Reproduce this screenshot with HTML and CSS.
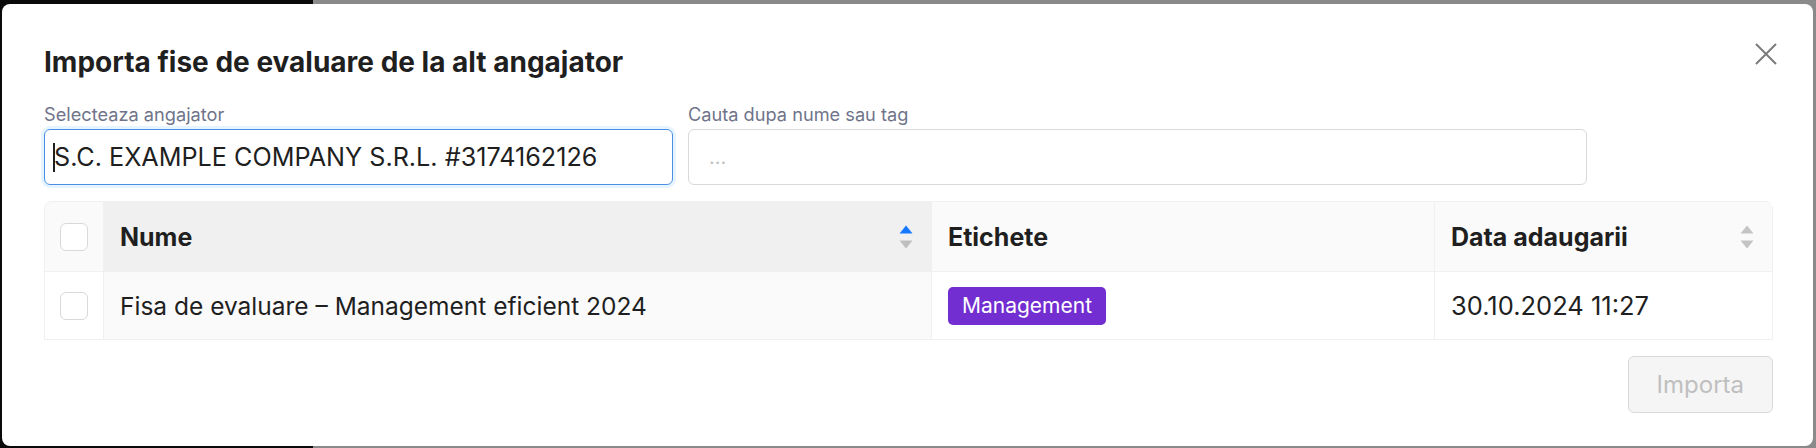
FILE: index.html
```html
<!DOCTYPE html>
<html lang="ro">
<head>
    <meta charset="UTF-8">
    <meta name="viewport" content="width=device-width, initial-scale=1.0">
    <title>Importa fise de evaluare</title>
    <link rel="stylesheet" href="styles.css">
</head>
<body>
    <div class="modal">
        <div class="modal-header">
            <h2 class="modal-title">Importa fise de evaluare de la alt angajator</h2>
            <button class="close-button" aria-label="Inchide">
                <svg width="22" height="22" viewBox="0 0 22 22">
                    <path d="M1 1 L21 21 M21 1 L1 21" stroke="#7b7b7b" stroke-width="2" fill="none"/>
                </svg>
            </button>
        </div>

        <div class="filters">
            <div class="field field-company">
                <label class="field-label">Selecteaza angajator</label>
                <div class="input input-focused"><span class="caret"></span>S.C. EXAMPLE COMPANY S.R.L. #3174162126</div>
            </div>
            <div class="field field-search">
                <label class="field-label">Cauta dupa nume sau tag</label>
                <div class="input"><span class="placeholder">...</span></div>
            </div>
        </div>

        <div class="sheet-table">
            <div class="cell head cell-check"><span class="checkbox"></span></div>
            <div class="cell head cell-sorted">
                <span>Nume</span>
                <svg class="sorter" width="14" height="24" viewBox="0 0 14 24">
                    <path d="M7 0.5 L13.5 8.5 L0.5 8.5 Z" fill="#1677ff"/>
                    <path d="M0.5 15.5 L13.5 15.5 L7 23.5 Z" fill="#bfbfbf"/>
                </svg>
            </div>
            <div class="cell head">Etichete</div>
            <div class="cell head">
                <span>Data adaugarii</span>
                <svg class="sorter" width="14" height="24" viewBox="0 0 14 24">
                    <path d="M7 0.5 L13.5 8.5 L0.5 8.5 Z" fill="#c4c4c4"/>
                    <path d="M0.5 15.5 L13.5 15.5 L7 23.5 Z" fill="#c4c4c4"/>
                </svg>
            </div>

            <div class="cell cell-check"><span class="checkbox"></span></div>
            <div class="cell cell-sorted">Fisa de evaluare – Management eficient 2024</div>
            <div class="cell"><span class="tag">Management</span></div>
            <div class="cell cell-date">30.10.2024 11:27</div>
        </div>

        <div class="modal-footer">
            <button class="import-button" disabled>Importa</button>
        </div>
    </div>
</body>
</html>
```

FILE: styles.css
```css
body {
    margin: 0;
    height: 448px;
    overflow: hidden;
    font-family: Inter, "Noto Sans", sans-serif;
    color: #1f1f1f;
    background: linear-gradient(to right, #0a0a0a 313px, #8a8a8a 313px);
}
.modal {
    box-sizing: border-box;
    height: 442px;
    margin: 4px 3px 2px 2px;
    padding: 42px 40px 0 42px;
    background: #fff;
    border-radius: 8px;
}
.modal-header {
    display: flex;
    align-items: flex-start;
    justify-content: space-between;
}
.modal-title {
    margin: 0;
    font-size: 28px;
    font-weight: 700;
    line-height: 32px;
}
.close-button {
    width: 30px;
    height: 30px;
    margin: -7px -8px 0 0;
    padding: 4px;
    border: none;
    background: none;
    cursor: pointer;
}
.filters {
    display: flex;
    gap: 15px;
    margin-top: 24px;
}
.field-company {
    width: 629px;
}
.field-search {
    width: 899px;
}
.field-label {
    display: block;
    font-size: 18.2px;
    line-height: 24px;
    color: #6f748a;
    margin-bottom: 3px;
}
.input {
    box-sizing: border-box;
    height: 56px;
    display: flex;
    align-items: center;
    padding: 0 20px;
    border: 1px solid #d9d9d9;
    border-radius: 6px;
    font-size: 25.2px;
    color: #1f1f1f;
}
.input-focused {
    padding-left: 8px;
    border-color: #4a8fe6;
    box-shadow: 0 0 0 3px rgba(5, 145, 255, 0.1);
}
.caret {
    width: 2px;
    height: 29px;
    background: #1f1f1f;
    margin-right: -1px;
}
.placeholder {
    color: #bfbfbf;
    font-size: 20px;
}
.sheet-table {
    display: grid;
    grid-template-columns: 59px 828px 503px 1fr;
    grid-template-rows: 70px 68px;
    margin-top: 16px;
    border-top: 1px solid #f0f0f0;
    border-left: 1px solid #f0f0f0;
    border-radius: 8px 8px 0 0;
    overflow: hidden;
}
.cell {
    box-sizing: border-box;
    display: flex;
    align-items: center;
    padding: 0 16px;
    border-right: 1px solid #f0f0f0;
    border-bottom: 1px solid #f0f0f0;
    font-size: 24.5px;
    background: #fff;
}
.cell.head {
    justify-content: space-between;
    font-size: 25px;
    font-weight: 700;
    background: #fafafa;
}
.cell.cell-sorted {
    background: #fafafa;
}
.cell.head.cell-sorted {
    background: #f0f0f0;
}
.cell-date {
    font-size: 25.5px;
}
.cell-check {
    justify-content: center !important;
    padding: 0;
}
.checkbox {
    box-sizing: border-box;
    width: 28px;
    height: 28px;
    border: 1px solid #d9d9d9;
    border-radius: 6px;
    background: #fff;
}
.sorter {
    margin-right: 2px;
}
.tag {
    display: inline-block;
    padding: 0 14px;
    line-height: 38px;
    font-size: 21px;
    color: #fff;
    background: #722ed1;
    border-radius: 5px;
}
.modal-footer {
    display: flex;
    justify-content: flex-end;
    margin-top: 16px;
}
.import-button {
    height: 57px;
    padding: 0 28px;
    font-family: inherit;
    font-size: 24px;
    color: #bfbfbf;
    background: #f5f5f5;
    border: 1px solid #d9d9d9;
    border-radius: 6px;
}
```
